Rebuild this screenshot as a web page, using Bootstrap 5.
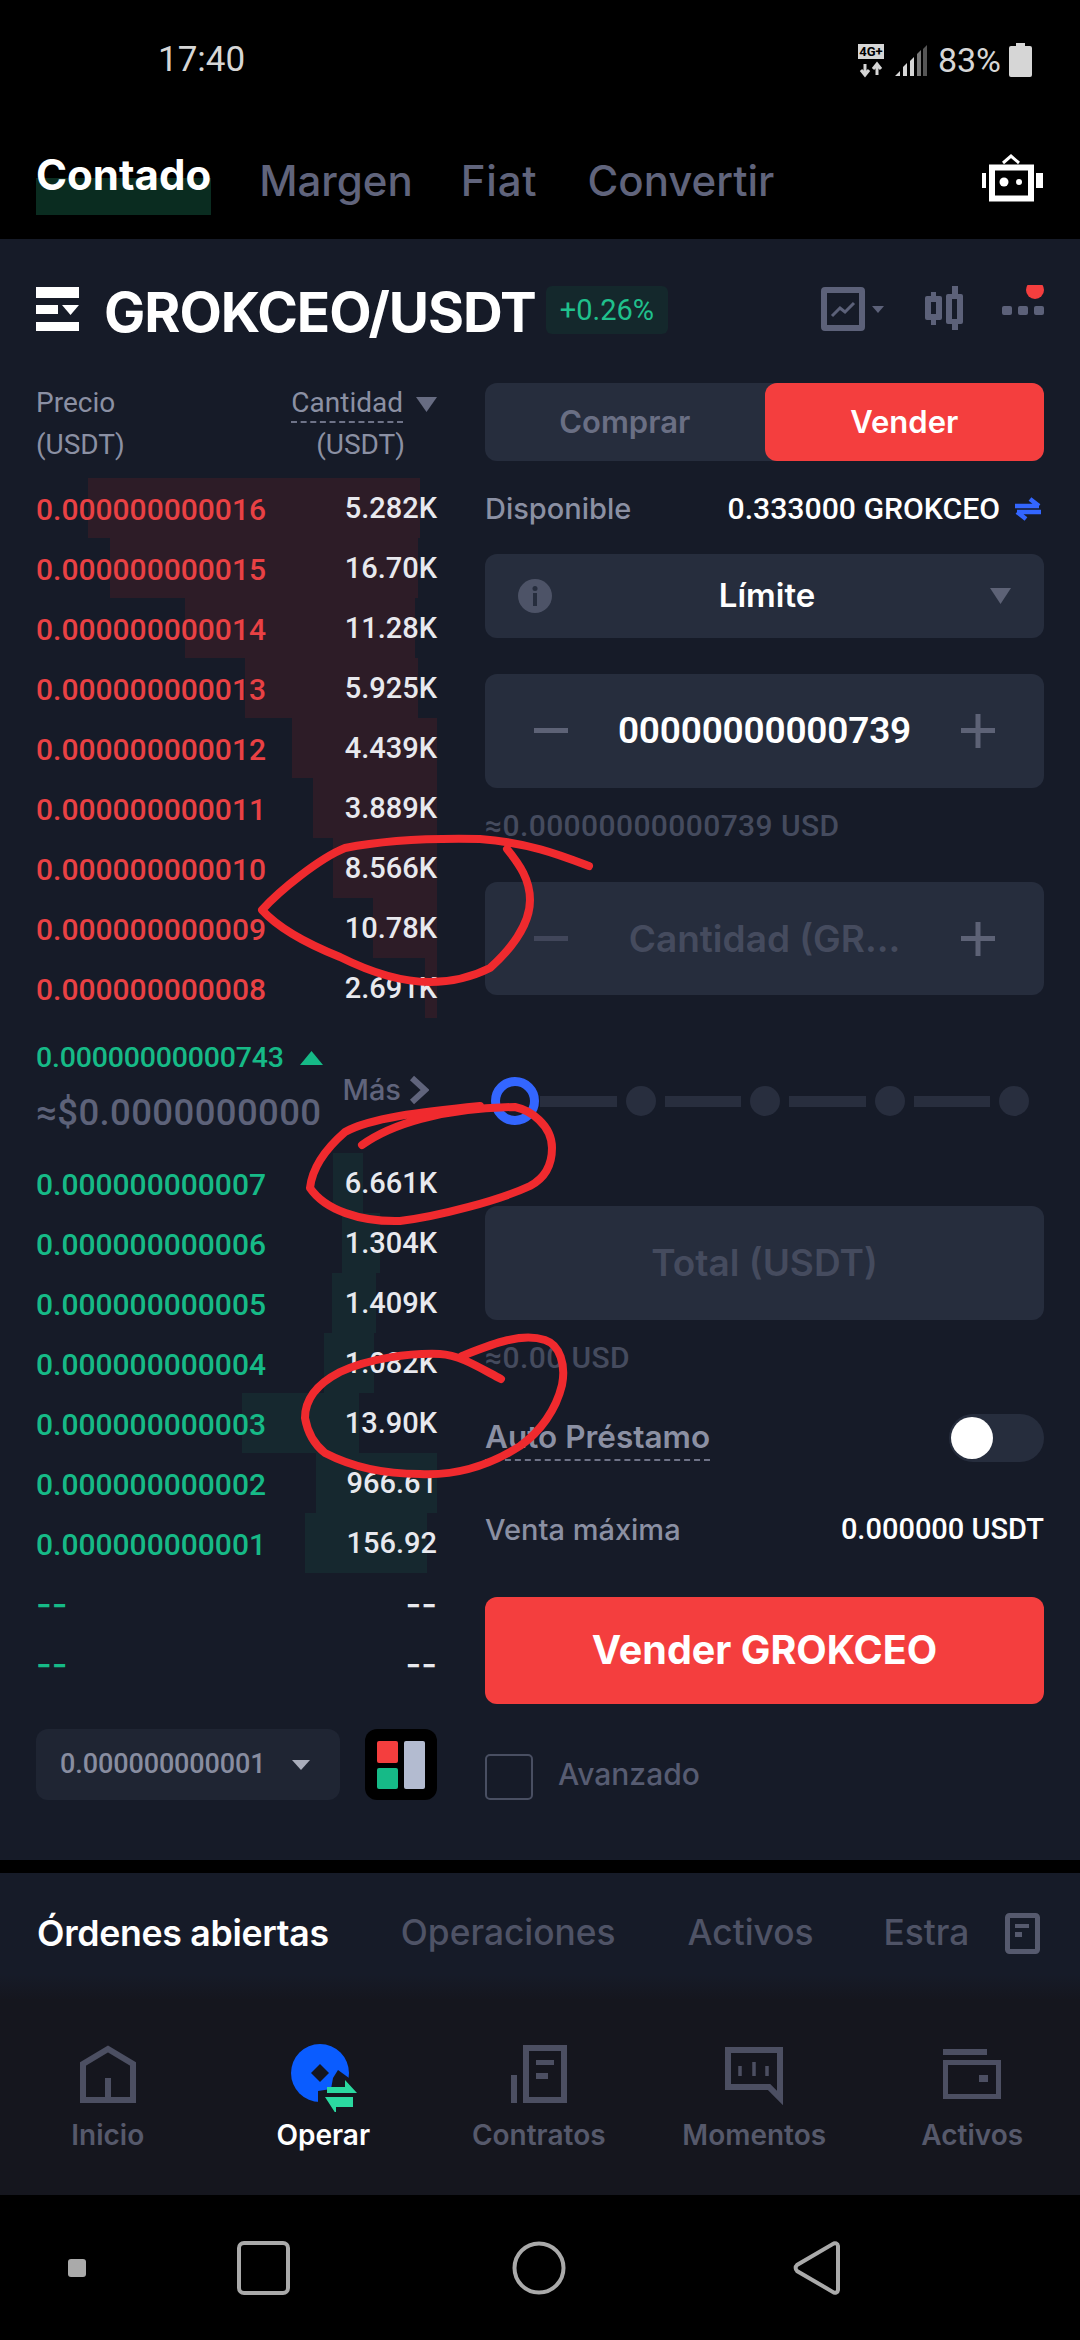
<!DOCTYPE html>
<html lang="es">
<head>
<meta charset="utf-8">
<title>GROKCEO/USDT</title>
<link rel="stylesheet" href="https://cdn.jsdelivr.net/npm/bootstrap@5.3.0/dist/css/bootstrap.min.css">
<style>
html,body{margin:0;background:#000;}
body{width:1080px;height:2340px;overflow:hidden;position:relative;font-family:"Inter","Noto Sans",sans-serif;color:#fff;}
.tx-status{height:120px;padding:0 48px 0 158px;color:#d6d6d6;font-family:"Roboto",sans-serif;font-size:35px;}
.tx-pct{font-size:34px;}
.tx-topnav{height:119px;padding:0 36px;}
.tx-topnav span{font-size:42px;font-weight:500;color:#60647c;margin-right:48px;margin-top:3px;line-height:60px;}
.tx-topnav .tx-fiat-tab{margin-right:50px;letter-spacing:.8px;}
.tx-topnav .tx-on{color:#fff;font-weight:700;margin-top:-6px;margin-right:48px;margin-bottom:-4px;font-size:42px;padding-bottom:8px;background:linear-gradient(#0000 0 48%,#0a2c20 48%);line-height:64px;}
.tx-trade{height:1621px;background:#161b28;}
.tx-head{height:140px;padding:0 36px;}
.tx-pair{font-size:55px;font-weight:700;letter-spacing:-1px;margin-left:25px;padding-top:6px;}
.tx-chg{background:#14282c;color:#20c08c;font-family:"Roboto",sans-serif;font-size:29px;height:48px;line-height:48px;border-radius:6px;padding:0 14px;margin-left:10px;margin-top:2px;}
.tx-left{width:401px;margin-left:36px;flex:none;}
.tx-right{width:559px;margin-left:48px;flex:none;padding-top:4px;}
.tx-cols{height:99px;padding-top:3px;color:#8b90a3;font-family:"Roboto",sans-serif;font-size:28px;line-height:42px;}
.tx-dash{border-bottom:2px dashed #6e7388;line-height:36px;display:inline-block;}
.tx-tri{margin-left:13px;}
.tx-row{height:60px;padding-top:2px;font-family:"Roboto",sans-serif;font-size:30px;background-repeat:no-repeat;background-size:0 100%;}
.tx-row b{font-weight:500;}
.tx-ask{background-image:linear-gradient(#2d1c27,#2d1c27);}
.tx-ask b{color:#e94144;}
.tx-bid{background-image:linear-gradient(#16282f,#16282f);}
.tx-bid b{color:#16ba87;}
.tx-row i{font-style:normal;color:#e8e9ee;font-weight:500;font-size:29px;}
.tx-row .tx-dd{font-family:"Inter",sans-serif;font-size:34px;line-height:1;}
.tx-mid{height:135px;padding-top:22px;padding-bottom:13px;}
.tx-last{color:#16ba87;font-family:"Roboto",sans-serif;font-size:28.5px;font-weight:500;height:40px;line-height:40px;letter-spacing:-.2px;}
.tx-fiat{color:#5d6279;font-family:"Roboto",sans-serif;font-size:36.5px;font-weight:500;height:60px;line-height:60px;letter-spacing:.4px;margin-top:5px;white-space:nowrap}
.tx-more{color:#60647c;font-size:29px;font-weight:500;margin-left:auto;margin-right:8px;white-space:nowrap;}
.tx-sel{height:71px;margin-top:36px;}
.tx-prec{width:304px;background:#1f2533;border-radius:12px;color:#888da0;font-family:"Roboto",sans-serif;font-size:27px;font-weight:500;letter-spacing:-.1px;padding:0 30px 0 24px;}
.tx-lay{width:72px;background:#000;border-radius:12px;}
.tx-seg{height:78px;background:#262d3d;border-radius:12px;font-size:31px;font-weight:600;color:#6a6f84;}
.tx-seg>div{width:50%;}
.tx-seg .tx-sell{background:#f43e3e;color:#fff;border-radius:12px;}
.tx-line{font-size:29px;font-weight:500;color:#8b90a3;}
.tx-line em{font-style:normal;font-family:"Roboto",sans-serif;color:#fff;}
.tx-avail{font-size:30.200px;}
.tx-swap{margin:0 3px 0 15px;}
.tx-box{background:#262d3d;border-radius:12px;padding:0 33px;font-weight:600;}
.tx-wide{padding:0 49px;}
.tx-pm{color:#5d6276;}
.tx-kind{font-size:33px;margin-right:8px;}
.tx-input{font-family:"Roboto",sans-serif;font-size:37px;font-weight:600;letter-spacing:-.2px;}
.tx-ghost{color:#454b5e;font-size:37px;}
.tx-approx{height:40px;line-height:40px;margin-top:18px;color:#454b5e;font-family:"Roboto",sans-serif;font-size:30px;font-weight:500;letter-spacing:.4px;}
.tx-slider{height:50px;margin-top:81px;padding:0 15px 0 6px;gap:9px;}
.tx-dot{width:30px;height:30px;border-radius:50%;background:#282e3e;flex:none;}
.tx-thumb{width:48px;height:48px;border-radius:50%;border:9px solid #3366ff;flex:none;margin-right:-8px;}
.tx-bar{height:11px;background:#282e3e;flex:1;}
.tx-switch{width:95px;height:48px;border-radius:24px;background:#262d3d;padding-left:2px;}
.tx-knob{width:42px;height:42px;border-radius:50%;background:#fff;}
.tx-loan{line-height:44px;font-size:31.500px;font-weight:600;}
.tx-cta{height:107px;margin-top:47px;background:#f43e3e;border-radius:12px;color:#fff;font-size:39.500px;font-weight:700;border:0;width:100%;}
.tx-cta:hover{background:#f43e3e;color:#fff;}
.tx-check{width:48px;height:46px;border:2px solid #494f62;border-radius:5px;}
.tx-adv{color:#575c72;font-size:30px;font-weight:500;margin-left:25px;margin-top:-6px;}
.tx-tabs{height:127px;margin-top:13px;padding:0 40px 6px 37px;background:linear-gradient(#161b28 0 80%,#15161e);font-size:35.300px;font-weight:500;color:#4f5366;}
.tx-tabs span{margin-right:72px;white-space:nowrap;}
.tx-tabs .tx-on2{color:#fff;font-weight:600;letter-spacing:-.3px;font-size:35.700px;}
.tx-tabs .tx-tight{margin-right:70px;}
.tx-nav{height:195px;background:#15161e;padding-top:40px;}
.tx-nav>div{width:215.500px;font-size:28px;font-weight:600;color:#56596b;}
.tx-nav svg{display:block;height:72px;margin-bottom:2px;}
.tx-nav .tx-active{color:#fff;}
.tx-nudge{padding-left:5px;}
.tx-sys{height:145px;padding-left:68px;}
.tx-ink{position:absolute;left:0;top:0;pointer-events:none;}
</style>
</head>
<body>
<div class="tx-status d-flex align-items-center justify-content-between">
  <span>17:40</span>
  <div class="d-flex align-items-center">
    <svg width="86" height="40" viewBox="0 0 86 40"><rect x="6" y="4" width="26" height="15" fill="#d6d6d6"/><text x="19" y="16" text-anchor="middle" font-family="Roboto,sans-serif" font-size="13" font-weight="700" fill="#000">4G+</text><path d="M13 24v10M9 30l4 5 4-5M25 35V25M21 29l4-5 4 5" stroke="#d6d6d6" stroke-width="3" fill="none"/><path d="M43 36l5-5v5zM51 36v-9l4-4v13zM58 36V21l4-4v19z" fill="#d6d6d6"/><path d="M65 36V14l4-4v26z" fill="#777"/><path d="M71 36V9l4-4v31z" fill="#555"/></svg>
    <span class="tx-pct">83%</span>
    <svg class="ms-2" width="23" height="34" viewBox="0 0 23 34"><path d="M7 0h9v3h5a2 2 0 0 1 2 2v27a2 2 0 0 1-2 2H2a2 2 0 0 1-2-2V5a2 2 0 0 1 2-2h5z" fill="#d6d6d6"/></svg>
  </div>
</div>
<div class="tx-topnav d-flex align-items-center">
  <span class="tx-on">Contado</span><span>Margen</span><span class="tx-fiat-tab">Fiat</span><span>Convertir</span>
  <svg class="ms-auto me-0" width="62" height="52" viewBox="0 0 62 52"><path d="M21 9l8-7 8 7" stroke="#fff" stroke-width="3" fill="none"/><rect x="10" y="13.500" width="39" height="31" fill="none" stroke="#fff" stroke-width="6"/><circle cx="22" cy="28" r="4.500" fill="#fff"/><circle cx="37" cy="28" r="3" fill="#fff"/><rect x="0" y="19" width="4" height="15" fill="#fff"/><rect x="54" y="19" width="7" height="15" fill="#fff"/></svg>
</div>
<div class="tx-trade">
  <div class="tx-head d-flex align-items-center">
    <svg width="43" height="44" viewBox="0 0 43 44"><rect width="43" height="11" fill="#fff"/><rect y="18" width="22" height="9" fill="#fff"/><path d="M26 18h17l-8.500 10z" fill="#fff"/><rect y="35" width="43" height="9" fill="#fff"/></svg>
    <span class="tx-pair">GROKCEO/USDT</span>
    <span class="tx-chg">+0.26%</span>
    <svg class="ms-auto" width="223" height="48" viewBox="0 0 223 48"><rect x="3" y="5" width="38" height="38" rx="1" fill="none" stroke="#5c6179" stroke-width="6"/><path d="M11 31l8-8 5 4 9-9" fill="none" stroke="#5c6179" stroke-width="3"/><path d="M51 21h12l-6 7z" fill="#5c6179"/><rect x="110" y="7" width="5" height="33" fill="#5c6179"/><rect x="104" y="11" width="17" height="24" rx="2" fill="#5c6179"/><rect x="110" y="17" width="5" height="12" fill="#161b28"/><rect x="131" y="1" width="6" height="44" fill="#5c6179"/><rect x="125" y="9" width="17" height="30" rx="2" fill="#5c6179"/><rect x="131" y="14" width="5" height="20" fill="#161b28"/><rect x="181" y="21" width="10" height="9" rx="2" fill="#5c6179"/><rect x="197" y="21" width="10" height="9" rx="2" fill="#5c6179"/><rect x="213" y="21" width="10" height="9" rx="2" fill="#5c6179"/><circle cx="214" cy="5" r="9" fill="#f43e3e"/></svg>
  </div>
  <div class="d-flex">
    <div class="tx-left">
      <div class="tx-cols d-flex justify-content-between">
        <div>Precio<br>(USDT)</div>
        <div class="text-end"><span class="tx-dash">Cantidad</span><svg class="tx-tri" width="21" height="15" viewBox="0 0 21 15"><path d="M0 0h21l-10.500 15z" fill="#676c82"/></svg><br><span class="me-4 pe-2">(USDT)</span></div>
      </div>
      <div class="tx-row tx-ask d-flex justify-content-between align-items-center" style="background-position-x:52px;background-size:332px 100%"><b>0.000000000016</b><i>5.282K</i></div>
      <div class="tx-row tx-ask d-flex justify-content-between align-items-center" style="background-position-x:74px;background-size:308px 100%"><b>0.000000000015</b><i>16.70K</i></div>
      <div class="tx-row tx-ask d-flex justify-content-between align-items-center" style="background-position-x:149px;background-size:230px 100%"><b>0.000000000014</b><i>11.28K</i></div>
      <div class="tx-row tx-ask d-flex justify-content-between align-items-center" style="background-position-x:209px;background-size:173px 100%"><b>0.000000000013</b><i>5.925K</i></div>
      <div class="tx-row tx-ask d-flex justify-content-between align-items-center" style="background-position-x:256px;background-size:145px 100%"><b>0.000000000012</b><i>4.439K</i></div>
      <div class="tx-row tx-ask d-flex justify-content-between align-items-center" style="background-position-x:277px;background-size:124px 100%"><b>0.000000000011</b><i>3.889K</i></div>
      <div class="tx-row tx-ask d-flex justify-content-between align-items-center" style="background-position-x:297px;background-size:104px 100%"><b>0.000000000010</b><i>8.566K</i></div>
      <div class="tx-row tx-ask d-flex justify-content-between align-items-center" style="background-position-x:337px;background-size:64px 100%"><b>0.000000000009</b><i>10.78K</i></div>
      <div class="tx-row tx-ask d-flex justify-content-between align-items-center" style="background-position-x:389px;background-size:12px 100%"><b>0.000000000008</b><i>2.691K</i></div>
      <div class="tx-mid d-flex align-items-center">
        <div>
          <div class="tx-last d-flex align-items-center">0.00000000000743<svg class="ms-3" width="23" height="14" viewBox="0 0 23 14"><path d="M11.500 0L23 14H0z" fill="#16ba87"/></svg></div>
          <div class="tx-fiat">≈$0.0000000000</div>
        </div>
        <div class="tx-more d-flex align-items-center">Más<svg class="ms-2" width="20" height="30" viewBox="0 0 20 30"><path d="M3 3l13 12L3 27" fill="none" stroke="#60647c" stroke-width="6"/></svg></div>
      </div>
      <div class="tx-row tx-bid d-flex justify-content-between align-items-center" style="background-position-x:297px;background-size:30px 100%"><b>0.000000000007</b><i>6.661K</i></div>
      <div class="tx-row tx-bid d-flex justify-content-between align-items-center" style="background-position-x:306px;background-size:38px 100%"><b>0.000000000006</b><i>1.304K</i></div>
      <div class="tx-row tx-bid d-flex justify-content-between align-items-center" style="background-position-x:296px;background-size:44px 100%"><b>0.000000000005</b><i>1.409K</i></div>
      <div class="tx-row tx-bid d-flex justify-content-between align-items-center" style="background-position-x:288px;background-size:50px 100%"><b>0.000000000004</b><i>1.082K</i></div>
      <div class="tx-row tx-bid d-flex justify-content-between align-items-center" style="background-position-x:206px;background-size:117px 100%"><b>0.000000000003</b><i>13.90K</i></div>
      <div class="tx-row tx-bid d-flex justify-content-between align-items-center" style="background-position-x:280px;background-size:121px 100%"><b>0.000000000002</b><i>966.61</i></div>
      <div class="tx-row tx-bid d-flex justify-content-between align-items-center" style="background-position-x:269px;background-size:122px 100%"><b>0.000000000001</b><i>156.92</i></div>
      <div class="tx-row tx-bid d-flex justify-content-between align-items-center"><b class="tx-dd">--</b><i class="tx-dd">--</i></div>
      <div class="tx-row tx-bid d-flex justify-content-between align-items-center"><b class="tx-dd">--</b><i class="tx-dd">--</i></div>
      <div class="tx-sel d-flex justify-content-between">
        <div class="tx-prec d-flex align-items-center justify-content-between">0.000000000001<svg width="18" height="10" viewBox="0 0 18 10"><path d="M0 0h18l-9 10z" fill="#a9adbb"/></svg></div>
        <div class="tx-lay d-flex align-items-center justify-content-center"><svg width="48" height="48" viewBox="0 0 48 48"><rect width="21" height="22" rx="2" fill="#f43e3e"/><rect y="27" width="21" height="21" rx="2" fill="#16ba87"/><rect x="27" width="21" height="48" rx="2" fill="#b3bbd0"/></svg></div>
      </div>
    </div>
    <div class="tx-right">
      <div class="tx-seg d-flex">
        <div class="d-flex align-items-center justify-content-center">Comprar</div>
        <div class="tx-sell d-flex align-items-center justify-content-center">Vender</div>
      </div>
      <div class="tx-line d-flex justify-content-between align-items-center mt-4" style="height:48px">
        <span>Disponible</span>
        <span class="d-flex align-items-center"><em class="tx-avail">0.333000 GROKCEO</em><svg class="tx-swap" width="26" height="24" viewBox="0 0 26 24"><path d="M0 9h24M15 2l9 7M26 15H2M11 22l-9-7" stroke="#3366ff" stroke-width="4.500" fill="none"/></svg></span>
      </div>
      <div class="tx-box d-flex align-items-center justify-content-between" style="height:84px;margin-top:21px">
        <svg width="34" height="34" viewBox="0 0 34 34"><circle cx="17" cy="17" r="17" fill="#4d5367"/><rect x="15" y="14" width="4" height="13" fill="#262d3d"/><circle cx="17" cy="9.500" r="2.500" fill="#262d3d"/></svg>
        <span class="tx-kind">Límite</span>
        <svg width="21" height="16" viewBox="0 0 21 16"><path d="M0 0h21l-10.500 16z" fill="#5d6276"/></svg>
      </div>
      <div class="tx-box tx-wide d-flex align-items-center justify-content-between" style="height:114px;margin-top:36px">
        <svg class="tx-pm" width="34" height="34" viewBox="0 0 34 34"><rect y="14" width="34" height="5" fill="currentColor"/></svg>
        <span class="tx-input">00000000000739</span>
        <svg class="tx-pm" width="34" height="34" viewBox="0 0 34 34"><path d="M0 14h14.500V0h5v14H34v5H19.500v15h-5V19H0z" fill="currentColor"/></svg>
      </div>
      <div class="tx-approx">≈0.00000000000739 USD</div>
      <div class="tx-box tx-wide d-flex align-items-center justify-content-between" style="height:113px;margin-top:36px">
        <svg width="34" height="34" viewBox="0 0 34 34"><rect y="14" width="34" height="5" fill="#41465a"/></svg>
        <span class="tx-ghost">Cantidad (GR...</span>
        <svg class="tx-pm" width="34" height="34" viewBox="0 0 34 34"><path d="M0 14h14.500V0h5v14H34v5H19.500v15h-5V19H0z" fill="currentColor"/></svg>
      </div>
      <div class="tx-slider d-flex align-items-center">
        <div class="tx-thumb"></div><div class="tx-bar"></div><div class="tx-dot"></div><div class="tx-bar"></div><div class="tx-dot"></div><div class="tx-bar"></div><div class="tx-dot"></div><div class="tx-bar"></div><div class="tx-dot"></div>
      </div>
      <div class="tx-box d-flex align-items-center justify-content-center tx-ghost" style="height:114px;margin-top:80px">Total (USDT)</div>
      <div class="tx-approx">≈0.00 USD</div>
      <div class="tx-line d-flex justify-content-between align-items-center" style="height:48px;margin-top:36px">
        <span class="tx-dash tx-loan">Auto Préstamo</span>
        <div class="tx-switch d-flex align-items-center"><div class="tx-knob"></div></div>
      </div>
      <div class="tx-line d-flex justify-content-between align-items-center" style="height:40px;margin-top:48px">
        <span>Venta máxima</span><em>0.000000 USDT</em>
      </div>
      <button class="btn tx-cta" type="button">Vender GROKCEO</button>
      <div class="d-flex align-items-center" style="margin-top:50px">
        <div class="tx-check"></div><span class="tx-adv">Avanzado</span>
      </div>
    </div>
  </div>
</div>
<div class="tx-tabs d-flex align-items-center">
  <span class="tx-on2">Órdenes abiertas</span><span>Operaciones</span><span class="tx-tight">Activos</span><span class="me-0">Estra</span>
  <svg class="ms-auto" width="35" height="41" viewBox="0 0 35 41"><rect x="2.500" y="2.500" width="30" height="36" rx="2" fill="none" stroke="#565a6e" stroke-width="5"/><rect x="10" y="11" width="14" height="4" fill="#565a6e"/><rect x="10" y="19" width="7" height="5" fill="#565a6e"/></svg>
</div>
<div class="tx-nav d-flex align-items-start">
  <div class="d-flex flex-column align-items-center">
    <svg width="56" height="72" viewBox="0 0 56 72"><path d="M3 60V24L28 9l25 15v36zM28 60V38" fill="none" stroke="#4c4f62" stroke-width="6"/></svg>Inicio
  </div>
  <div class="d-flex flex-column align-items-center tx-active">
    <svg width="80" height="72" viewBox="0 0 80 72"><g transform="translate(2 0)"><circle cx="35" cy="33" r="29" fill="#0a5cff"/><path d="M35 24l9 9-9 9-9-9z" fill="#15161e"/><path d="M53 30l11 8v34H33V51l13-2 2-11z" fill="#15161e"/><path d="M42 47h18v-7l12 13H42zM68 57v10H51v7L40 57z" fill="#2bd9a0"/></g></svg>Operar
  </div>
  <div class="d-flex flex-column align-items-center">
    <svg width="56" height="72" viewBox="0 0 56 72"><rect x="15" y="8" width="38" height="52" fill="none" stroke="#4c4f62" stroke-width="6"/><rect x="25" y="20" width="18" height="5" fill="#4c4f62"/><rect x="25" y="33" width="12" height="6" fill="#4c4f62"/><rect x="0" y="35" width="6" height="28" fill="#4c4f62"/></svg>Contratos
  </div>
  <div class="d-flex flex-column align-items-center">
    <svg width="58" height="72" viewBox="0 0 58 72"><path d="M3 10h52v48L44 47H3z" fill="none" stroke="#4c4f62" stroke-width="6"/><path d="M15 26v10M29 22v14M42 26v10" stroke="#4c4f62" stroke-width="3.500"/></svg>Momentos
  </div>
  <div class="d-flex flex-column align-items-center tx-nudge">
    <svg width="58" height="72" viewBox="0 0 58 72"><rect x="0" y="9" width="44" height="6" fill="#4c4f62"/><rect x="2.500" y="22.500" width="53" height="34" fill="none" stroke="#4c4f62" stroke-width="5"/><rect x="36" y="35" width="9" height="7" fill="#4c4f62"/></svg>Activos
  </div>
</div>
<div class="tx-sys d-flex align-items-center">
  <svg width="780" height="60" viewBox="0 0 780 60"><rect x="0" y="21" width="18" height="18" rx="3" fill="#aaa"/><rect x="171" y="5" width="49" height="50" rx="5" fill="none" stroke="#aaa" stroke-width="4"/><circle cx="471" cy="30" r="24.500" fill="none" stroke="#aaa" stroke-width="4"/><path d="M770 8v44a3 3 0 0 1-5 2L729 33a4 4 0 0 1 0-6L765 6a3 3 0 0 1 5 2z" fill="none" stroke="#aaa" stroke-width="4"/></svg>
</div>
<svg class="tx-ink" width="1080" height="2340" viewBox="0 0 1080 2340" fill="none" stroke="#f02a2e" stroke-width="8" stroke-linecap="round" stroke-linejoin="round">
  <path d="M589 866C560 855 530 843 480 839C430 838 380 841 345 848C320 858 280 890 262 910C280 930 310 945 340 957C370 972 400 982 430 982C450 982 470 978 490 968C510 950 530 925 530 900C530 880 520 865 507 849"/>
  <path d="M362 1145C390 1125 440 1108 515 1107C530 1110 552 1125 552 1148C552 1165 545 1178 530 1186C500 1200 440 1216 400 1221C360 1222 325 1210 310 1188C312 1170 322 1152 345 1132C370 1118 420 1112 480 1106"/>
  <path d="M501 1379C480 1368 460 1355 440 1354C410 1353 370 1358 340 1372C315 1385 305 1400 305 1418C308 1435 315 1445 325 1453C350 1466 380 1474 420 1474C460 1476 495 1462 520 1446C540 1432 556 1410 562 1385C566 1365 560 1345 545 1340C520 1332 490 1345 462 1356"/>
</svg>
<script src="https://cdn.jsdelivr.net/npm/bootstrap@5.3.0/dist/js/bootstrap.bundle.min.js"></script>
</body>
</html>
